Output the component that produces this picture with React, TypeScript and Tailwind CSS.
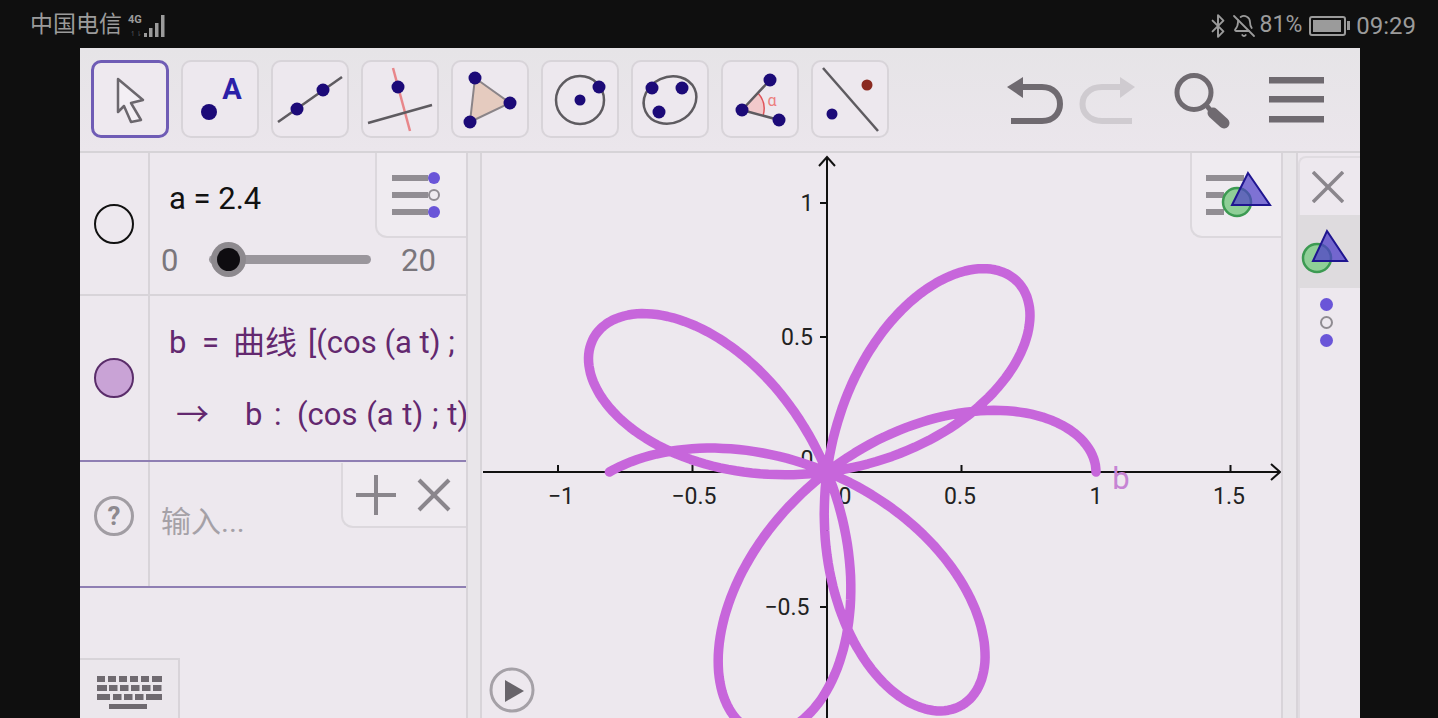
import { Bluetooth, BellOff } from 'lucide-react';

const fontStack = "Roboto, 'Noto Sans CJK SC', sans-serif";

// r = cos(2.4 t), t from 0 to 2 pi, drawn in page coordinates
const curvePoints = Array.from({ length: 481 }, (_, i) => {
  const t = (i / 480) * 2 * Math.PI;
  const r = Math.cos(2.4 * t);
  return `${(827 + 269 * r * Math.cos(t)).toFixed(1)},${(472 - 269.5 * r * Math.sin(t)).toFixed(1)}`;
}).join(' ');

const DOT = '#1c0a78';

function Dot({ cx, cy, r = 6.5, fill = DOT }: { cx: number; cy: number; r?: number; fill?: string }) {
  return <circle cx={cx} cy={cy} r={r} fill={fill} />;
}

function ToolButton({ active, children }: { active?: boolean; children?: React.ReactNode }) {
  return (
    <div
      className={
        active
          ? 'w-[78px] h-[78px] shrink-0 rounded-[10px] border-[3px] border-[#6f5cb5] bg-[#eee9ef]'
          : 'w-[78px] h-[78px] shrink-0 rounded-[10px] border-2 border-[#d8d4d9] bg-[#ede8ee]'
      }
    >
      {children}
    </div>
  );
}

function ToolIcon({ x, children }: { x: number; children: React.ReactNode }) {
  return (
    <svg viewBox={`${x} 62 74 74`} className="w-full h-full">
      {children}
    </svg>
  );
}

function Toolbar() {
  return (
    <div className="h-[105px] shrink-0 flex items-center pl-[11px] pr-[33px] pb-px gap-3 bg-gradient-to-b from-[#e6e4e7] to-[#ebe6ec] border-b-2 border-[#d6d3d7]">
      <ToolButton active>
        <svg viewBox="94 63 72 72" className="w-full h-full">
          <path d="M118 79 L143 100 L131 103 L141 120 L131 122 L124 106 L118 112 Z" fill="#f3eff4" stroke="#6b676d" strokeWidth="2.5" strokeLinejoin="round" />
        </svg>
      </ToolButton>
      <ToolButton>
        <ToolIcon x={183}>
          <Dot cx={209} cy={112} r={8} />
          <text x={232} y={99} textAnchor="middle" fontSize="29" fontWeight="700" fill="#2b1fa8" fontFamily="Roboto, sans-serif">A</text>
        </ToolIcon>
      </ToolButton>
      <ToolButton>
        <ToolIcon x={273}>
          <line x1={278} y1={122} x2={342} y2={77} stroke="#5e5b60" strokeWidth="2.5" />
          <Dot cx={297} cy={109} />
          <Dot cx={323} cy={90} />
        </ToolIcon>
      </ToolButton>
      <ToolButton>
        <ToolIcon x={363}>
          <line x1={393} y1={68} x2={410} y2={131} stroke="#e8868a" strokeWidth="2.5" />
          <line x1={368} y1={123} x2={432} y2={105} stroke="#5e5b60" strokeWidth="2.5" />
          <Dot cx={398} cy={87} />
        </ToolIcon>
      </ToolButton>
      <ToolButton>
        <ToolIcon x={453}>
          <path d="M475 78 L510 103 L470 122 Z" fill="#e5cbbf" stroke="#8a8488" strokeWidth="2" />
          <Dot cx={475} cy={78} />
          <Dot cx={510} cy={103} />
          <Dot cx={470} cy={122} />
        </ToolIcon>
      </ToolButton>
      <ToolButton>
        <ToolIcon x={543}>
          <circle cx={580} cy={100} r={24} fill="none" stroke="#5e5b60" strokeWidth="2.5" />
          <Dot cx={580} cy={100} r={5.5} />
          <Dot cx={599} cy={87} />
        </ToolIcon>
      </ToolButton>
      <ToolButton>
        <ToolIcon x={633}>
          <ellipse cx={670} cy={100} rx={27} ry={23} transform="rotate(-25 670 100)" fill="none" stroke="#5e5b60" strokeWidth="2.5" />
          <Dot cx={652} cy={88} />
          <Dot cx={682} cy={88} />
          <Dot cx={659} cy={112} />
        </ToolIcon>
      </ToolButton>
      <ToolButton>
        <ToolIcon x={723}>
          <path d="M742 110 L758 93 A24 24 0 0 1 763 116 Z" fill="#f2c9cb" />
          <path d="M758 93 A24 24 0 0 1 763 116" fill="none" stroke="#e0545a" strokeWidth="1.5" />
          <path d="M770 80 L742 110 L779 120" fill="none" stroke="#5e5b60" strokeWidth="2.5" />
          <Dot cx={742} cy={110} />
          <Dot cx={770} cy={80} />
          <Dot cx={779} cy={120} />
          <text x={772} y={106} textAnchor="middle" fontSize="16" fill="#ec7f7f" fontFamily="Roboto, sans-serif">α</text>
        </ToolIcon>
      </ToolButton>
      <ToolButton>
        <ToolIcon x={813}>
          <line x1={823} y1={68} x2={878} y2={131} stroke="#5e5b60" strokeWidth="2.5" />
          <Dot cx={867} cy={85} r={5.5} fill="#8a2a20" />
          <Dot cx={832} cy={114} r={5.5} />
        </ToolIcon>
      </ToolButton>

      <div className="ml-auto flex items-center">
        <svg viewBox="1004 70 60 60" className="w-[60px] h-[60px]">
          <path d="M1007 88 L1023 78 L1023 99 Z" fill="#6f6a70" />
          <path d="M1020 88 H1042 C1066 88 1066 122 1042 122 H1011" fill="none" stroke="#6f6a70" strokeWidth="6" />
        </svg>
        <svg viewBox="1078 70 60 60" className="w-[60px] h-[60px] ml-[14px]">
          <path d="M1135 88 L1120 78 L1120 99 Z" fill="#cfcbd0" />
          <path d="M1122 88 H1102 C1076 88 1076 122 1102 122 H1132" fill="none" stroke="#cfcbd0" strokeWidth="6" />
        </svg>
        <svg viewBox="1172 70 60 60" className="w-[60px] h-[60px] ml-[34px]">
          <circle cx={1194} cy={93.5} r={17} fill="none" stroke="#6f6a70" strokeWidth="5" />
          <line x1={1207} y1={107} x2={1211} y2={112} stroke="#6f6a70" strokeWidth="5" />
          <line x1={1213} y1={114} x2={1224} y2={124} stroke="#6f6a70" strokeWidth="11" strokeLinecap="round" />
        </svg>
        <svg viewBox="1267 70 60 60" className="w-[60px] h-[60px] ml-[35px]">
          <rect x={1269} y={78} width={55} height={6.5} fill="#6f6a70" />
          <rect x={1269} y={97} width={55} height={6.5} fill="#6f6a70" />
          <rect x={1269} y={117} width={55} height={6.5} fill="#6f6a70" />
        </svg>
      </div>
    </div>
  );
}

function StatusBar() {
  return (
    <div className="h-12 shrink-0 flex items-center justify-between pl-[30px] pr-[22px] pt-[3px] text-[#9b9b9b]">
      <div className="flex items-center">
        <span className="text-[23px]">中国电信</span>
        <svg viewBox="0 0 40 26" className="w-[40px] h-[26px] ml-[5px]">
          <text x={1} y={10} fontSize="11" fontWeight="700" fill="#9b9b9b" fontFamily="Roboto, sans-serif">4G</text>
          <text x={3} y={23} fontSize="7" fill="#55555a" fontFamily="Roboto, sans-serif">↿⇂</text>
          <rect x={17} y={20} width={3} height={4} fill="#9b9b9b" />
          <rect x={22} y={15} width={3.5} height={9} fill="#9b9b9b" />
          <rect x={28} y={10} width={3.5} height={14} fill="#9b9b9b" />
          <rect x={34} y={2} width={3.5} height={22} fill="#9b9b9b" />
        </svg>
      </div>
      <div className="flex items-center">
        <Bluetooth className="w-[26px] h-[26px]" strokeWidth={1.8} />
        <BellOff className="w-[24px] h-[24px] ml-[1px]" strokeWidth={1.8} />
        <span className="text-[23px] ml-[4px]">81%</span>
        <div className="ml-[7px] flex items-center">
          <div className="w-[37px] h-[20px] border-2 border-[#9b9b9b] rounded-[3px] p-[2px]">
            <div className="w-[28px] h-full bg-[#9b9b9b]" />
          </div>
          <div className="w-[3px] h-[9px] bg-[#9b9b9b] ml-[1px]" />
        </div>
        <span className="text-[24px] ml-[6px]">09:29</span>
      </div>
    </div>
  );
}

function AlgebraPanel() {
  return (
    <div className="w-[386px] shrink-0 relative flex flex-col overflow-hidden">
      <div className="h-[143px] shrink-0 flex border-b-2 border-[#d8d4d9]">
        <div className="w-[70px] shrink-0 flex items-center justify-center border-r-2 border-[#d8d4d9]">
          <div className="w-[40px] h-[40px] rounded-full border-2 border-[#111]" />
        </div>
        <div className="flex-1 min-w-0">
          <div className="pt-[28px] pl-[19px] text-[31px] leading-[36px] text-[#111]">a = 2.4</div>
          <div className="mt-[24px] h-[36px] pl-[11px] flex items-center text-[#7a767c] text-[31px]">
            <span className="w-[48px] shrink-0 pt-[4px]">0</span>
            <div className="w-[162px] h-[9px] shrink-0 rounded-full bg-[#9a969c] relative">
              <div className="absolute left-[2px] top-[-13px] w-[35px] h-[35px] rounded-full bg-[#8d898e]" />
              <div className="absolute left-[8px] top-[-7px] w-[23px] h-[23px] rounded-full bg-[#0e0c10]" />
            </div>
            <span className="ml-[30px] pt-[4px]">20</span>
          </div>
        </div>
      </div>
      <div className="h-[166px] shrink-0 flex border-b-2 border-[#8f7fb3]">
        <div className="w-[70px] shrink-0 flex items-center justify-center border-r-2 border-[#d8d4d9]">
          <div className="w-[40px] h-[40px] rounded-full border-2 border-[#5a2d6a] bg-[#c9a3d6]" />
        </div>
        <div className="flex-1 min-w-0 overflow-hidden whitespace-nowrap text-[#63286f] text-[31px] leading-[36px]">
          <div className="pt-[29px] pl-[19px] flex">
            <span className="w-[64px] shrink-0 [word-spacing:8px]">b =</span>
            <span className="w-[75px] shrink-0 text-[32px]">曲线</span>
            <span>[(cos (a t) ;</span>
          </div>
          <div className="mt-[36px] flex items-center">
            <span className="ml-[26px] w-[69px] shrink-0 text-[#63286f] text-[33px]">→</span>
            <span className="w-[52px] shrink-0 [word-spacing:4px]">b :</span>
            <span className="[word-spacing:1px]">(cos (a t) ; t)</span>
          </div>
        </div>
      </div>
      <div className="h-[126px] shrink-0 flex border-b-2 border-[#8f7fb3]">
        <div className="w-[70px] shrink-0 flex items-center justify-center pb-[16px] border-r-2 border-[#d8d4d9]">
          <div className="w-[40px] h-[40px] rounded-full border-[3px] border-[#a19da3] flex items-center justify-center text-[#8d898f] text-[26px] font-bold leading-none">?</div>
        </div>
        <div className="pl-[11px] pt-[40px] text-[30px] leading-[40px] text-[#a5a1a7]">输入...</div>
      </div>
      <div className="flex-1 flex items-end">
        <div className="w-[100px] h-[60px] border-t-2 border-r-2 border-[#d8d4d9] flex items-start justify-center bg-[#ebe7ec]">
          <svg viewBox="98 672 66 40" className="w-[66px] h-[40px] mt-[13px] ml-[2px]">
            {[98, 109, 120, 131, 142, 153].map(x => <rect key={x} x={x} y={675} width={x === 153 ? 10 : 8} height={6} fill="#6f6a70" />)}
            {[98, 110, 121, 132, 143, 154].map(x => <rect key={x} x={x} y={684} width={x === 98 ? 10 : 8.5} height={6} fill="#6f6a70" />)}
            {[98, 114, 125, 136].map(x => <rect key={x} x={x} y={693} width={x === 98 ? 13 : 8.5} height={6} fill="#6f6a70" />)}
            <rect x={147} y={693} width={16} height={6} fill="#6f6a70" />
            <rect x={110} y={703} width={38} height={5} fill="#6f6a70" />
          </svg>
        </div>
      </div>

      {/* floating style button */}
      <div className="absolute right-0 top-0 w-[91px] h-[85px] border-l-2 border-b-2 border-[#dcd8dd] rounded-bl-xl bg-[#efebf0]">
        <svg viewBox="377 153 89 83" className="w-full h-full">
          {[178, 195, 212].map(y => <rect key={y} x={392} y={y - 3} width={36} height={6} fill="#918d93" />)}
          <circle cx={434} cy={178} r={6} fill="#6a55d8" />
          <circle cx={434} cy={195} r={5} fill="#efebf0" stroke="#918d93" strokeWidth="2" />
          <circle cx={434} cy={212} r={6} fill="#6a55d8" />
        </svg>
      </div>

      {/* add / close input */}
      <div className="absolute right-0 top-[310px] w-[125px] h-[65px] border-l-2 border-b-2 border-[#dcd8dd] rounded-bl-xl bg-[#efebf0]">
        <svg viewBox="343 462 123 63" className="w-full h-full" stroke="#8a868c" strokeWidth="4">
          <line x1={356} y1={494} x2={396} y2={494} />
          <line x1={376} y1={474} x2={376} y2={514} />
          <line x1={419} y1={479} x2={449} y2={509} />
          <line x1={449} y1={479} x2={419} y2={509} />
        </svg>
      </div>
    </div>
  );
}

const xTicks = [
  { x: 561, tick: 558, label: '−1' },
  { x: 694, tick: 692.5, label: '−0.5' },
  { x: 960, tick: 961.5, label: '0.5' },
  { x: 1096, tick: 1096, label: '1' },
  { x: 1229, tick: 1230.5, label: '1.5' },
];

function GraphicsView() {
  return (
    <div className="flex-1 min-w-0 relative overflow-hidden">
      <svg viewBox="482 153 799 565" className="block w-full h-full" fontFamily="Roboto, sans-serif">
        <g stroke="#111" strokeWidth="2" fill="none">
          <line x1={827} y1={158} x2={827} y2={718} />
          <line x1={483} y1={472} x2={1279} y2={472} />
          <path d="M819 166 L827 157 L835 166" />
          <path d="M1271 464 L1280 472 L1271 480" />
          {xTicks.map(t => <line key={t.label} x1={t.tick} y1={465} x2={t.tick} y2={472} />)}
          {[203, 337, 607].map(y => <line key={y} x1={820} y1={y} x2={827} y2={y} />)}
        </g>
        <g fontSize="23" fill="#222" textAnchor="middle">
          {xTicks.map(t => <text key={t.label} x={t.x} y={504}>{t.label}</text>)}
          <text x={845} y={504}>0</text>
          <text x={807} y={211}>1</text>
          <text x={797} y={345}>0.5</text>
          <text x={807} y={467}>0</text>
          <text x={787} y={615}>−0.5</text>
        </g>
        <polyline points={curvePoints} fill="none" stroke="#c766db" strokeWidth="9.5" strokeLinejoin="round" strokeLinecap="round" />
        <text x={1121} y={489} fontSize="31" textAnchor="middle" fill="#c684d4">b</text>
        <circle cx={512} cy={690} r={21} fill="none" stroke="#a5a1a7" strokeWidth="3" />
        <path d="M505 680 L524 691 L505 702 Z" fill="#68646a" />
      </svg>
      <div className="absolute right-0 top-0 w-[91px] h-[85px] border-l-2 border-b-2 border-[#dcd8dd] rounded-bl-xl bg-[#efebf0]">
        <svg viewBox="1192 153 89 83" className="w-full h-full">
          <rect x={1206} y={175} width={38} height={6} fill="#918d93" />
          <rect x={1206} y={192} width={18} height={6} fill="#918d93" />
          <rect x={1206} y={209} width={18} height={6} fill="#918d93" />
          <circle cx={1237} cy={202} r={14} fill="#8fcf97" stroke="#3c9a52" strokeWidth="2.5" />
          <path d="M1248 173 L1270 205 L1232 205 Z" fill="#4f3fc8" fillOpacity="0.7" stroke="#1f1590" strokeWidth="2" />
        </svg>
      </div>
    </div>
  );
}

function SidePanel() {
  return (
    <div className="w-[62px] shrink-0 flex flex-col">
      <div className="mt-[3px] h-[59px] shrink-0 flex items-center justify-center pr-[4px] rounded-tl-lg border-l-2 border-t-2 border-[#e0dce1]">
        <svg viewBox="0 0 32 32" className="w-[32px] h-[32px]" stroke="#8a868c" strokeWidth="3.5">
          <line x1={1} y1={1} x2={31} y2={31} />
          <line x1={31} y1={1} x2={1} y2={31} />
        </svg>
      </div>
      <div className="h-[73px] shrink-0 bg-[#dedbde] flex items-center justify-center">
        <svg viewBox="1298 215 62 73" className="w-[62px] h-[73px]">
          <circle cx={1317} cy={258} r={14} fill="#8fcf97" stroke="#3c9a52" strokeWidth="2.5" />
          <path d="M1327 231 L1347 261 L1313 261 Z" fill="#4f3fc8" fillOpacity="0.75" stroke="#1f1590" strokeWidth="2" />
        </svg>
      </div>
      <div className="flex-1 border-l-2 border-[#e0dce1] flex flex-col items-center pt-[10px] gap-[5px] pr-[8px]">
        <div className="w-[13px] h-[13px] rounded-full bg-[#6a55d8]" />
        <div className="w-[13px] h-[13px] rounded-full border-2 border-[#8f8b91]" />
        <div className="w-[13px] h-[13px] rounded-full bg-[#6a55d8]" />
      </div>
    </div>
  );
}

export default function App() {
  return (
    <div className="w-[1438px] h-[718px] overflow-hidden bg-[#0f0f0f] flex flex-col" style={{ fontFamily: fontStack }}>
      <StatusBar />
      <div className="mr-[78px] ml-20 flex-1 min-h-0 flex flex-col bg-[#ede8ee]">
        <Toolbar />
        <div className="flex-1 min-h-0 flex">
          <AlgebraPanel />
          <div className="w-[16px] shrink-0 border-x-2 border-[#d8d4d9] bg-[#e9e6ea]" />
          <GraphicsView />
          <div className="w-[17px] shrink-0 border-x-2 border-[#d8d4d9] bg-[#e9e6ea]" />
          <SidePanel />
        </div>
      </div>
    </div>
  );
}
